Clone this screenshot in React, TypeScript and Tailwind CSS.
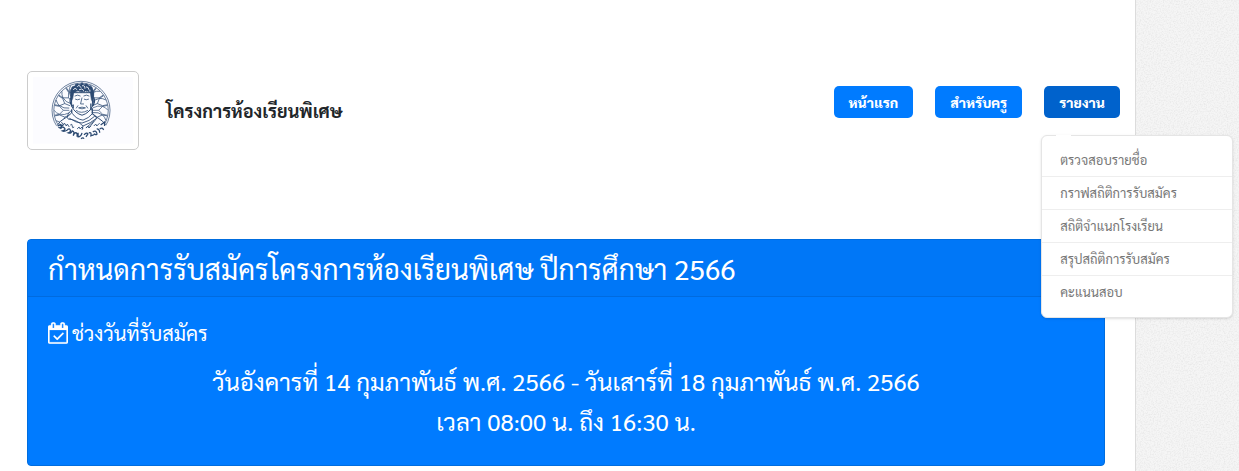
import { useState } from 'react';

const reports = [
  'ตรวจสอบรายชื่อ',
  'กราฟสถิติการรับสมัคร',
  'สถิติจำแนกโรงเรียน',
  'สรุปสถิติการรับสมัคร',
  'คะแนนสอบ',
];

function SchoolSeal() {
  const petals = Array.from({ length: 16 }, (_, i) => (i * 360) / 16);

  return (
    <svg viewBox="0 0 102 68" className="w-full h-auto" fill="none" stroke="#2c4a72" role="img" aria-label="ตราโรงเรียน">
      <rect width="102" height="68" fill="#fcfcff" stroke="none" />
      <g strokeWidth="0.7">
        <circle cx="49" cy="34" r="29.6" />
        <circle cx="49" cy="34" r="27.8" />
        {petals.map((deg) => (
          <path key={deg} transform={`rotate(${deg} 49 34)`} d="M49 22V16L45 12L44 7M49 16L53 12L54 7M45 12L46.500 9L49 6.500M46.500 22L44.700 17L45 12" />
        ))}
      </g>
      {/* shoulders and robe */}
      <path d="M22 54C26 43 34 42 39 37L60 37C64 41 73 43 77 54L71 61Q49 69 27 61Z" fill="#fcfcff" stroke="none" />
      <path d="M25 49C28 43 35 42 39 37M60 37C63 41 71 43 74 49" strokeWidth="1" />
      <path d="M39 34Q33 40 36 43Q44 43 51 50Q59 47 65 42Q63 38 60 37M40 37Q44 43 51 44Q57 42 61 37M37 42Q44 47 50 47Q58 45 63 40M51 50L50 54M65 42L57 52M62 45L54 52" strokeWidth="0.9" />
      {/* head */}
      <path d="M39 16L39.500 30Q43 37 50 39Q57 37 60.500 30L61 16Z" fill="#fcfcff" strokeWidth="1" />
      <path d="M39 25L38 14L40 10L43 9L45 7L48 8L50 5.500L52 8L55 7L57 9L60 10L62 15L61.500 27L59.500 23L58.500 16L55 14L50 15L45 14L41.500 16L40.500 22Z" fill="#2c4a72" strokeWidth="0.6" />
      <path d="M41 13q2-3 4 0M45 10q2-3 4 1M50 9q3-1 3 3M54 10q3 0 3 3M47 13q3-2 5 1M58 13v2" stroke="#fcfcff" strokeWidth="0.9" />
      <path d="M38.500 21q-2 4 1.500 9M62 21q2 5-1.500 9M59 27v7M41 28v4M39.500 33v4M60.500 32v5" strokeWidth="1.300" />
      <path d="M42.500 19.500q3-2 6 0M51.500 19.500q3-2 6 0M43 22.500q2 1.500 5 0M52 22.500q2 1.500 5 0M50 21L48.500 27.500h3.500M46.500 31.500q3.500-1.500 7 0q-3.500 2-7 0M44 34q5 4 12 0M46 29l-2 3M54 29l2 3" strokeWidth="0.8" />
      {/* lettering along the foot of the seal */}
      <path d="M29 46l2 3 1-2 2 3 1-2 2 3M38 49q2-2 2 1t2 1M45 53l2-2 1 2 2-2 1 2M54 52l2-2 1 2 2-2M62 50l2-2 1 2 3-3" strokeWidth="0.9" />
      <path d="M25 50q3-2 4 0q-1 3-3 1M28 53q2-3 4-1t-2 3q2 1 5-1q2-2 3 0t-2 3q3 1 4-2q3 1 1 4M41 60q2-5 4-2v3M46 57v4q3 0 4-4M52 59q3-3 4-1l-2 3M57 57q3-1 2 3l3-1M61 56q3-2 4 1t-3 1M65 53q3 0 3 4M68 53q3-2 4 1M27 48l4 2M69 49l4-3v4M49 63q2-2 3 0" strokeWidth="1.300" />
    </svg>
  );
}

function CalendarCheck() {
  return (
    <svg viewBox="0 0 1664 1792" className="h-[22px] w-5 shrink-0" fill="currentColor" stroke="currentColor" strokeWidth="20" aria-hidden="true">
      <path d="M1303 964l-512 512q-10 9-23 9t-23-9l-288-288q-9-10-9-23t9-22l46-46q9-9 22-9t23 9l220 220 444-444q10-9 23-9t22 9l46 46q9 9 9 22t-9 23zM128 1664h1408v-1024h-1408v1024zm384-1216v-288q0-14-9-23t-23-9h-64q-14 0-23 9t-9 23v288q0 14 9 23t23 9h64q14 0 23-9t9-23zm768 0v-288q0-14-9-23t-23-9h-64q-14 0-23 9t-9 23v288q0 14 9 23t23 9h64q14 0 23-9t9-23zm384-64v1280q0 52-38 90t-90 38h-1408q-52 0-90-38t-38-90v-1280q0-52 38-90t90-38h128v-96q0-66 47-113t113-47h64q66 0 113 47t47 113v96h384v-96q0-66 47-113t113-47h64q66 0 113 47t47 113v96h128q52 0 90 38t38 90z" />
    </svg>
  );
}

function PaperTexture() {
  return (
    <svg className="absolute inset-0 h-full w-full" aria-hidden="true">
      <filter id="paper">
        <feTurbulence type="fractalNoise" baseFrequency="0.7" numOctaves="2" />
        <feColorMatrix values="0 0 0 0 0.5  0 0 0 0 0.5  0 0 0 0 0.5  0.5 0 0 0 -0.2" />
      </filter>
      <rect width="100%" height="100%" filter="url(#paper)" />
    </svg>
  );
}

export default function App() {
  const [isOpen, setIsOpen] = useState(true);
  const navButton = 'h-8 rounded-[5px] px-[15px] text-[14px] font-extrabold text-white whitespace-nowrap transition-colors';

  return (
    <div className="flex min-h-screen bg-[#f5f5f5] font-[Sarabun,'Noto_Sans',sans-serif] text-[#212529]">
      <div className="relative z-10 min-w-0 flex-1 border-r border-[#dcdcdc] bg-white">
        <header className="flex items-start justify-between pt-[71px] pr-[15px] pl-[27px]">
          <div className="flex items-center gap-[27px]">
            <a href="#" className="block w-28 rounded-[5px] border border-[#ccc] bg-white p-[5px]">
              <SchoolSeal />
            </a>
            <h1 className="text-[18px] font-bold">โครงการห้องเรียนพิเศษ</h1>
          </div>

          <nav className="mt-[15px] flex gap-[22px]">
            <button className={`${navButton} bg-[#007bff] hover:bg-[#0062cc]`}>หน้าแรก</button>
            <button className={`${navButton} bg-[#007bff] hover:bg-[#0062cc]`}>สำหรับครู</button>
            <div className="relative">
              <button onClick={() => setIsOpen(!isOpen)} aria-expanded={isOpen} className={`${navButton} bg-[#0062cc]`}>
                รายงาน
              </button>
              {isOpen && (
                <ul className="absolute top-[49px] -left-[3px] w-48 rounded-md border border-[#e5e5e5] bg-white pt-2 pb-[9px] shadow-sm">
                  <li aria-hidden="true" className="absolute -top-px left-[14px] h-px w-[15px] bg-white" />
                  {reports.map((report) => (
                    <li key={report} className="border-b border-[#eee] last:border-b-0">
                      <a href="#" className="block px-[18px] text-[13px] leading-8 text-[#777] hover:text-[#007bff]">
                        {report}
                      </a>
                    </li>
                  ))}
                </ul>
              )}
            </div>
          </nav>
        </header>

        <main className="mt-[89px] mr-[30px] ml-[27px]">
          <section className="rounded-[4px] border border-[#006ddf] bg-[#007bff] text-white">
            <h2 className="border-b border-[#006bdf] bg-[#0077f7] px-5 py-3 text-[28px] leading-8">
              กำหนดการรับสมัครโครงการห้องเรียนพิเศษ ปีการศึกษา 2566
            </h2>
            <div className="px-5 pt-5 pb-6">
              <h3 className="flex items-center gap-1 text-[20px] leading-8">
                <CalendarCheck />
                ช่วงวันที่รับสมัคร
              </h3>
              <p className="mt-3 text-center text-[24px] leading-10">
                วันอังคารที่ 14 กุมภาพันธ์ พ.ศ. 2566 - วันเสาร์ที่ 18 กุมภาพันธ์ พ.ศ. 2566
                <br />
                เวลา 08:00 น. ถึง 16:30 น.
              </p>
            </div>
          </section>
        </main>
      </div>

      <aside className="relative w-[103px] shrink-0 overflow-hidden">
        <PaperTexture />
      </aside>
    </div>
  );
}
